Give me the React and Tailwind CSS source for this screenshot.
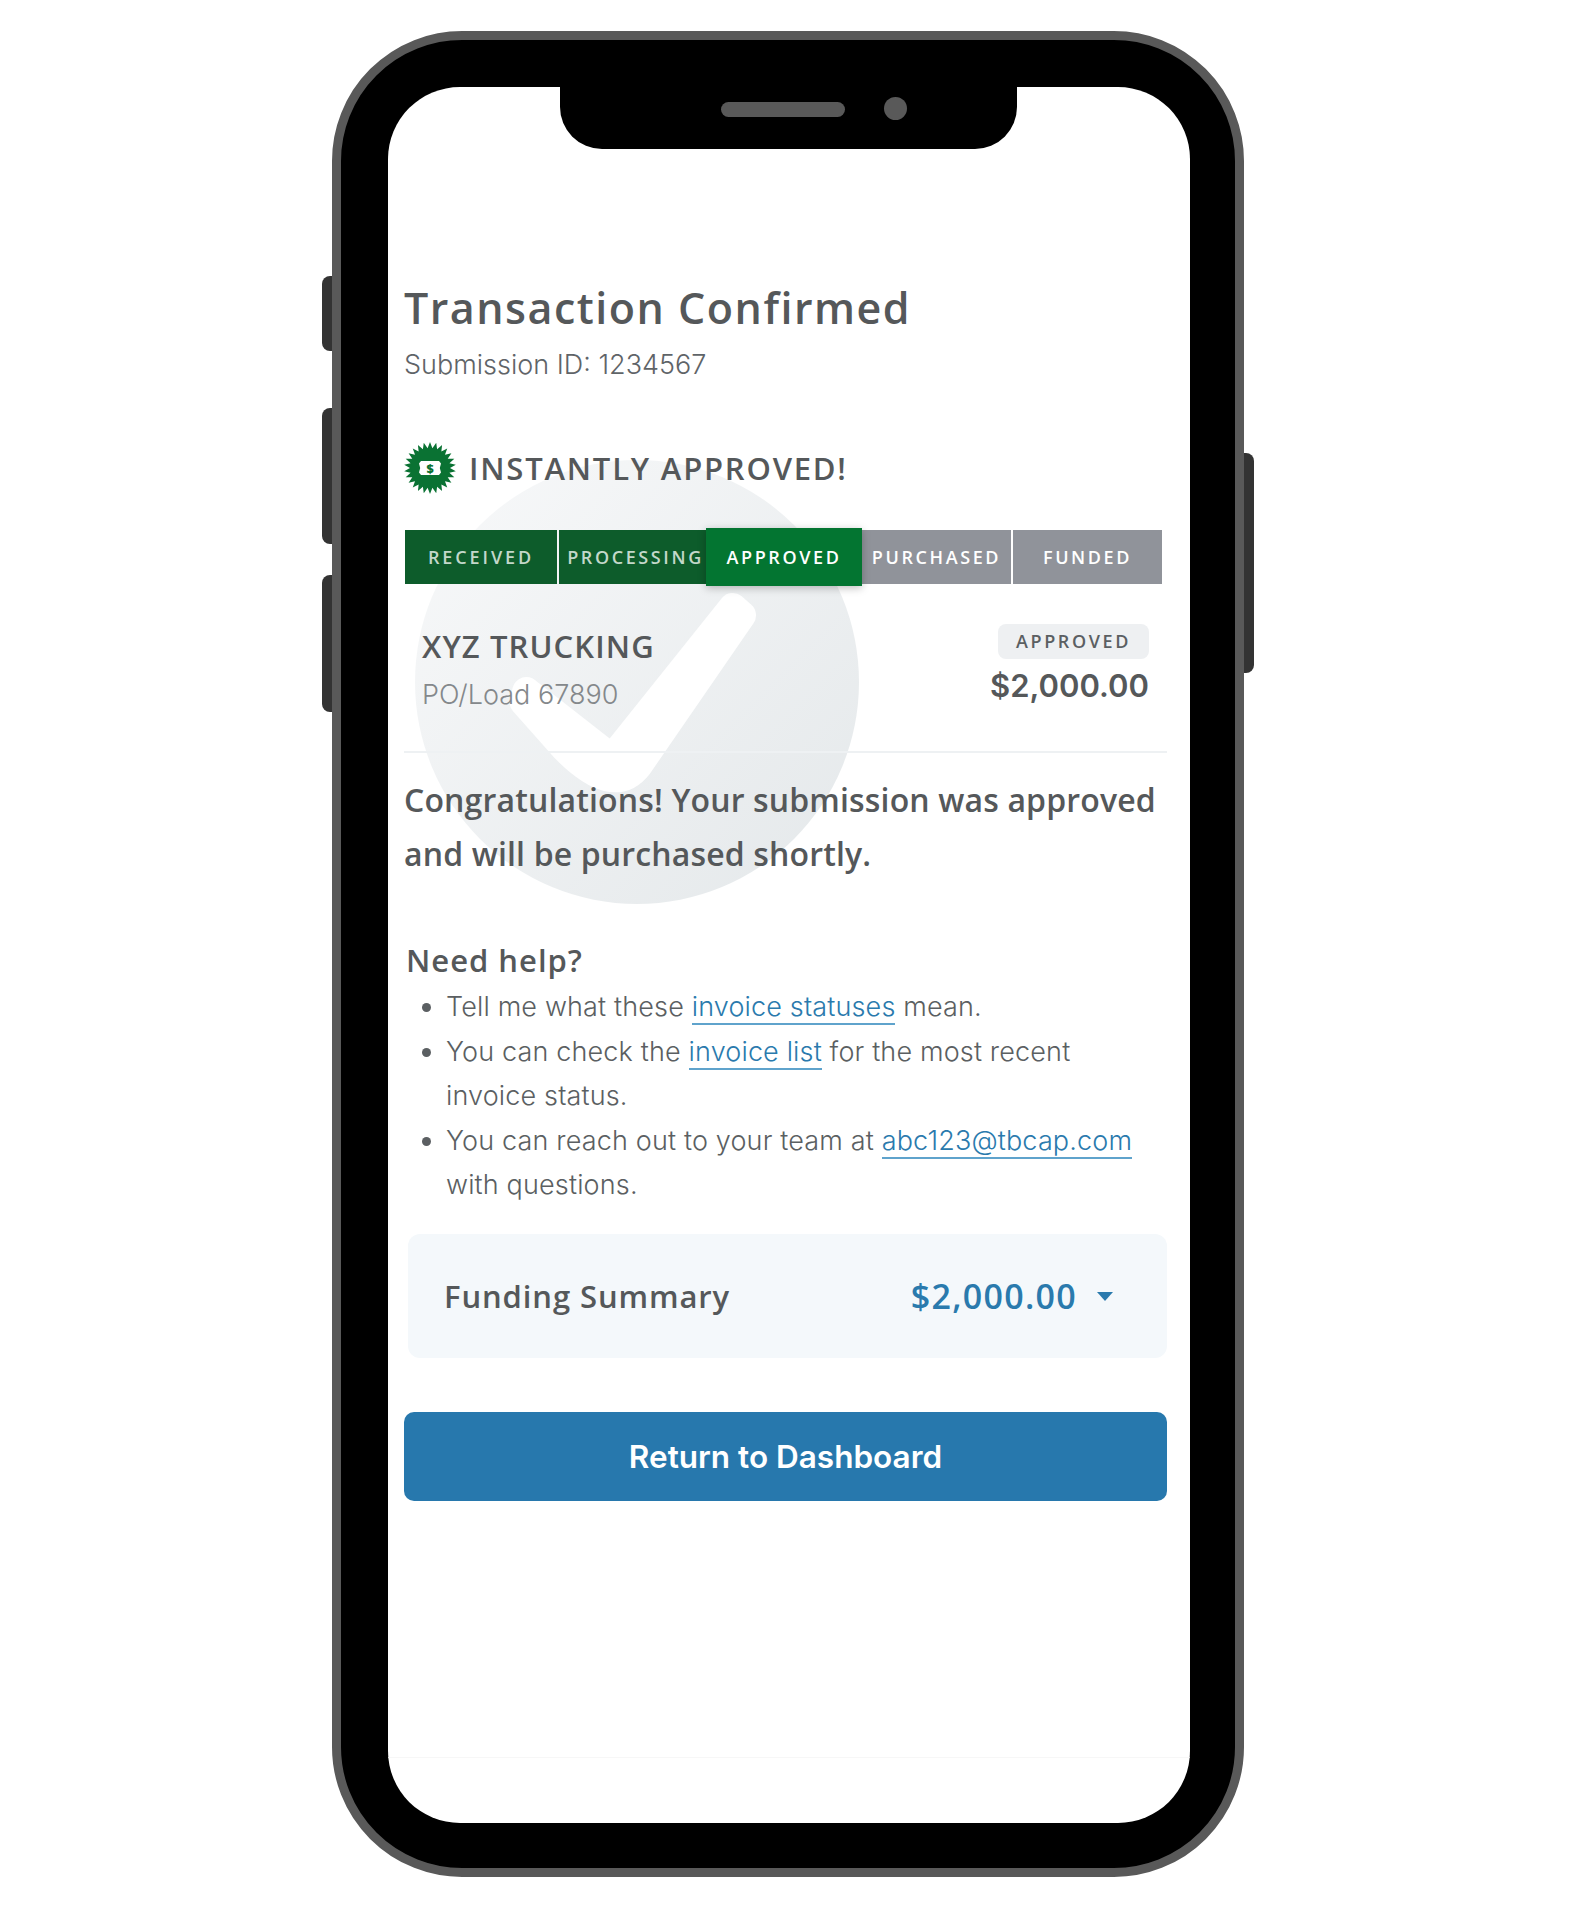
const heading = "font-['Open_Sans','Liberation_Sans',sans-serif]";

const steps = [
  { label: "RECEIVED", cls: "w-[152px] bg-[#0d5c2b] text-[#c3d8ca] tracking-[2.900px]" },
  { label: "PROCESSING", cls: "w-[147px] bg-[#0d5c2b] pl-[6px] text-[#c3d8ca] tracking-[2.600px]" },
  { label: "APPROVED", cls: "relative z-10 -mx-[2px] -my-[2px] w-[156px] bg-[#037531] text-white tracking-[2.600px] shadow-[0_2px_8px_rgba(0,0,0,0.25)]" },
  { label: "PURCHASED", cls: "w-[149px] bg-[#90939a] text-white tracking-[2.600px]" },
  { label: "FUNDED", cls: "w-[149px] bg-[#90939a] text-white tracking-[2.600px]" },
];

function burstPoints() {
  const pts = [];
  const n = 26;
  for (let i = 0; i < n * 2; i++) {
    const r = i % 2 === 0 ? 26 : 20;
    const a = (Math.PI * i) / n - Math.PI / 2;
    pts.push(`${(26 + r * Math.cos(a)).toFixed(2)},${(26 + r * Math.sin(a)).toFixed(2)}`);
  }
  return pts.join(" ");
}

function ApprovedBadge() {
  return (
    <svg width="52" height="52" viewBox="0 0 52 52" className="shrink-0">
      <polygon points={burstPoints()} fill="#0a7233" />
      <path d="M17 19h18l2 2.500-1.200 4.500 1.200 4.500-2 2.500H17l-2-2.500 1.200-4.500-1.200-4.500z" fill="#fff" />
      <text x="26" y="30.500" textAnchor="middle" fontSize="12.500" fontWeight="800" fontFamily="'Open Sans', sans-serif" fill="#0a7233">$</text>
    </svg>
  );
}

function Check() {
  return (
    <div className="absolute left-[27px] top-[373px] h-[444px] w-[444px] rounded-full bg-gradient-to-br from-[#f8f9fa] to-[#e4e8ea]">
      <svg width="444" height="444" viewBox="0 0 444 444" className="block">
        <path
          d="M317.700 147L327 155.300L223.700 305.300Q198 338.300 148.700 287.300L108.700 242.300L111.300 231L197 298Z"
          fill="#fff"
          stroke="#fff"
          strokeWidth="28"
          strokeLinejoin="round"
        />
      </svg>
    </div>
  );
}

function Link({ children }) {
  return <a className="border-b-2 border-[#5fa3cc] text-[#2a7aad]">{children}</a>;
}

export default function App() {
  return (
    <div className="min-h-[1916px] bg-white pb-[39px] pl-[332px] pt-[31px] font-['Inter','Liberation_Sans',sans-serif]">
      <div className="relative h-[1846px] w-[912px] rounded-[130px] border-[9px] border-[#595959] bg-black pb-[45px] pl-[47px] pr-[45px] pt-[47px]">
        <div className="absolute -left-[19px] top-[236px] h-[75px] w-[10px] rounded-l-[8px] bg-[#333333]" />
        <div className="absolute -left-[19px] top-[368px] h-[136px] w-[10px] rounded-l-[8px] bg-[#333333]" />
        <div className="absolute -left-[19px] top-[535px] h-[137px] w-[10px] rounded-l-[8px] bg-[#333333]" />
        <div className="absolute -right-[19px] top-[413px] h-[220px] w-[10px] rounded-r-[8px] bg-[#333333]" />

        <div className="relative h-full w-full overflow-hidden rounded-[72px] bg-white">
          <div className="absolute left-[172px] top-0 flex h-[62px] w-[457px] items-start rounded-b-[42px] bg-black">
            <div className="ml-[161px] mt-[15px] h-[15px] w-[124px] rounded-full bg-[#595959]" />
            <div className="ml-[39px] mt-[10px] h-[23px] w-[23px] rounded-full bg-[#595959]" />
          </div>

          <Check />

          <div className="relative pl-[16px] pr-[23px] pt-[197px] text-[#5b5f62]">
            <h1 className={`${heading} text-[43px] font-semibold leading-[48px] tracking-[1.5px] text-[#55585a]`}>Transaction Confirmed</h1>
            <p className="mt-[17px] text-[27px] font-light leading-[32px] text-[#5f6468]">Submission ID: 1234567</p>

            <div className="mt-[61px] flex h-[52px] items-center">
              <ApprovedBadge />
              <span className={`${heading} ml-[13px] text-[31px] font-semibold leading-[36px] tracking-[1.800px] text-[#55585a]`}>INSTANTLY APPROVED!</span>
            </div>

            <div className="ml-px mt-[36px] flex h-[54px] w-[757px] items-stretch gap-[2px]">
              {steps.map((s) => (
                <div key={s.label} className={`flex items-center justify-center ${heading} text-[18px] font-semibold ${s.cls}`}>
                  {s.label}
                </div>
              ))}
            </div>

            <div className="mt-[40px] flex h-[129px] items-start justify-between border-b-2 border-[#eef1f3] pl-[18px] pr-[18px]">
              <div className="pt-[4px]">
                <div className={`${heading} text-[31px] font-semibold leading-[36px] tracking-[1.100px] text-[#55585a]`}>XYZ TRUCKING</div>
                <div className="mt-[13px] text-[27px] font-light leading-[36px] text-[#84888b]">PO/Load 67890</div>
              </div>
              <div className="flex flex-col items-end">
                <div className={`${heading} flex h-[35px] w-[151px] items-center justify-center rounded-[8px] bg-[#eef0f2] text-[18px] font-semibold tracking-[2.600px] text-[#5b5f62]`}>APPROVED</div>
                <div className="mt-[9px] text-[31px] font-semibold leading-[36px] text-[#55585a]">$2,000.00</div>
              </div>
            </div>

            <p className={`${heading} mt-[20px] text-[32px] font-semibold leading-[54px] tracking-[0.150px] text-[#55585a]`}>
              Congratulations! Your submission was approved and will be purchased shortly.
            </p>

            <h2 className={`${heading} ml-[2px] mt-[61px] text-[31px] font-semibold leading-[36px] tracking-[1px] text-[#55585a]`}>Need help?</h2>
            <ul className="mt-[7px] list-disc pl-[42px] pr-[20px] text-[27px] font-light leading-[44.5px] tracking-[0.150px]">
              <li>Tell me what these <Link>invoice statuses</Link> mean.</li>
              <li>You can check the <Link>invoice list</Link> for the most recent invoice status.</li>
              <li>You can reach out to your team at <Link>abc123@tbcap.com</Link> with questions.</li>
            </ul>

            <div className="ml-[4px] mt-[26.500px] flex h-[124px] items-center justify-between rounded-[12px] bg-[#f4f8fb] pl-[36px] pr-[54px]">
              <span className={`${heading} text-[31px] font-semibold tracking-[0.900px] text-[#55585a]`}>Funding Summary</span>
              <span className="flex items-center gap-[20px]">
                <span className={`${heading} text-[34px] font-semibold tracking-[1.300px] text-[#2a7aad]`}>$2,000.00</span>
                <span className="h-0 w-0 border-x-[8px] border-t-[9px] border-x-transparent border-t-[#2a7aad]" />
              </span>
            </div>

            <button className="mt-[54px] flex h-[89px] w-full items-center justify-center rounded-[10px] bg-[#2778ad] text-[31.500px] font-semibold text-white">
              Return to Dashboard
            </button>
          </div>

          <div className="relative mt-[256px] h-px bg-[#f7f7f7]" />
        </div>
      </div>
    </div>
  );
}
